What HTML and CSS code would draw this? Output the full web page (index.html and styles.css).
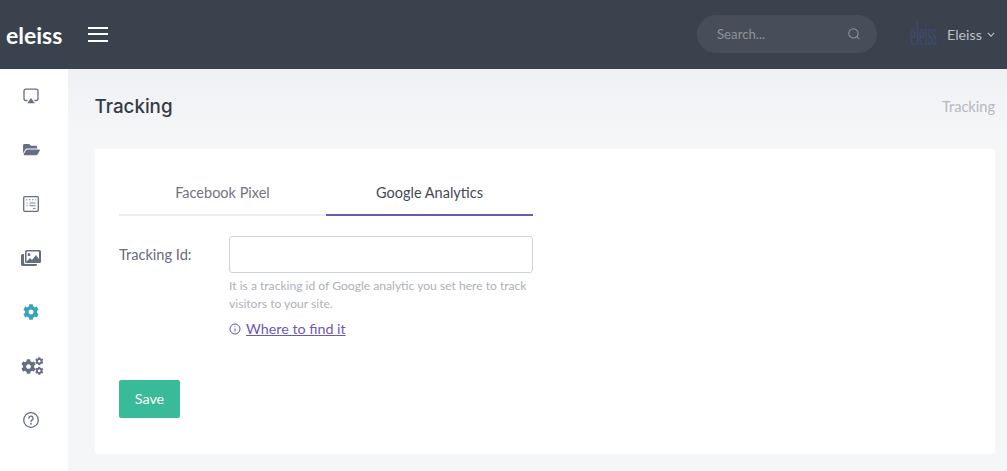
FILE: index.html
```html
<!DOCTYPE html>
<html lang="en">
<head>
<meta charset="utf-8">
<title>Tracking</title>
<link rel="stylesheet" href="styles.css">
</head>
<body>
<svg class="defs" aria-hidden="true">
  <symbol id="cog" viewBox="0 0 512 512"><path d="M487.4 315.7l-42.6-24.6c4.3-23.2 4.3-47 0-70.2l42.6-24.6c4.9-2.8 7.1-8.6 5.5-14-11.1-35.6-30-67.8-54.7-94.6-3.8-4.1-10-5.1-14.8-2.3L380.8 110c-17.9-15.4-38.5-27.3-60.8-35.1V25.8c0-5.6-3.9-10.5-9.4-11.7-36.7-8.2-74.3-7.8-109.2 0-5.5 1.2-9.4 6.1-9.4 11.7V75c-22.2 7.9-42.8 19.8-60.8 35.1L88.7 85.5c-4.9-2.8-11-1.9-14.8 2.3-24.7 26.7-43.6 58.9-54.7 94.6-1.7 5.4.6 11.2 5.5 14L67.3 221c-4.3 23.2-4.3 47 0 70.2l-42.6 24.6c-4.9 2.8-7.1 8.6-5.5 14 11.1 35.6 30 67.8 54.7 94.6 3.8 4.1 10 5.1 14.8 2.3l42.6-24.6c17.9 15.4 38.5 27.3 60.8 35.1v49.2c0 5.6 3.9 10.5 9.4 11.7 36.7 8.2 74.3 7.8 109.2 0 5.5-1.2 9.4-6.1 9.4-11.7v-49.2c22.2-7.9 42.8-19.8 60.8-35.1l42.6 24.6c4.9 2.8 11 1.9 14.8-2.3 24.7-26.7 43.6-58.9 54.7-94.6 1.5-5.5-.7-11.3-5.6-14.1zM256 336c-44.1 0-80-35.9-80-80s35.9-80 80-80 80 35.9 80 80-35.9 80-80 80z"/></symbol>
</svg>
<header class="topbar">
  <div class="brand">eleiss</div>
  <button class="burger" aria-label="Menu"><span></span><span></span><span></span></button>
  <div class="top-right">
    <div class="search">
      <span class="search-text">Search...</span>
      <svg class="search-icon" viewBox="0 0 24 24"><circle cx="11" cy="11" r="8"/><path d="M21 21l-4.300-4.300"/></svg>
    </div>
    <div class="user">
      <span class="avatar"><span class="avatar-text">eleiss</span></span>
      <span class="user-name">Eleiss</span>
      <svg class="chevron" viewBox="0 0 10 6"><path d="M1 1l4 4 4-4"/></svg>
    </div>
  </div>
</header>
<div class="body-row">
  <nav class="sidebar">
    <a class="nav-item">
      <svg class="ic-line ic16" viewBox="0 0 16 16"><path d="M4 12.500H2.800A1.800 1.800 0 0 1 1 10.700V3a1.800 1.800 0 0 1 1.800-1.800h10.400A1.800 1.800 0 0 1 15 3v7.700a1.800 1.800 0 0 1-1.800 1.800H12"/><path class="solid" d="M8 10l3.800 5.200H4.200z"/></svg>
    </a>
    <a class="nav-item">
      <svg class="ic-fill ic-folder" viewBox="0 0 576 512"><path d="M572.694 292.093L500.27 416.248A63.997 63.997 0 0 1 444.989 448H45.025c-18.523 0-30.064-20.093-20.731-36.093l72.424-124.155A64 64 0 0 1 152 256h399.964c18.523 0 30.064 20.093 20.73 36.093zM152 224h328v-48c0-26.51-21.49-48-48-48H272l-64-64H48C21.49 64 0 85.49 0 112v278.046l69.077-118.418C86.214 242.25 117.989 224 152 224z"/></svg>
    </a>
    <a class="nav-item">
      <svg class="ic-line ic16" viewBox="0 0 16 16"><rect x=".7" y=".7" width="14.600" height="14.600" rx="1"/><path class="thin" d="M3 3.800h10" stroke-dasharray="1.500 1.500"/><path class="thin" d="M3.500 7h1M6.500 7h6M3.500 9.700h1M6.500 9.700h6M10 12.400h2.500"/></svg>
    </a>
    <a class="nav-item">
      <svg class="ic-fill ic-images" viewBox="0 0 20 16"><path d="M3 4v8.500A1.500 1.500 0 0 0 4.500 14H16v.5a1.500 1.500 0 0 1-1.500 1.500h-13A1.500 1.500 0 0 1 0 14.500v-9A1.500 1.500 0 0 1 1.500 4z"/><path fill-rule="evenodd" d="M5.500 0h13A1.500 1.500 0 0 1 20 1.500v10a1.500 1.500 0 0 1-1.500 1.500h-13A1.500 1.500 0 0 1 4 11.500v-10A1.500 1.500 0 0 1 5.500 0zm.5 1.500a.5.500 0 0 0-.5.5v9l.1.500 3.400-3.500 2 2 4-5 3 4V2a.5.500 0 0 0-.5-.5zM8 3a1.500 1.500 0 1 1 0 3 1.500 1.500 0 0 1 0-3z"/></svg>
    </a>
    <a class="nav-item nav-active">
      <svg class="ic-fill ic16" viewBox="0 0 16 16"><use href="#cog"/></svg>
    </a>
    <a class="nav-item">
      <svg class="ic-fill ic-cogs" viewBox="0 0 23 18"><use href="#cog" x="0" y="2" width="15" height="15"/><use href="#cog" x="14" y="0" width="8.500" height="8.500"/><use href="#cog" x="14" y="9.500" width="8.500" height="8.500"/></svg>
    </a>
    <a class="nav-item">
      <svg class="ic-line ic16" viewBox="0 0 16 16"><circle cx="8" cy="8" r="7.300"/><path d="M5.900 6.200a2.100 2.100 0 1 1 3.300 1.700C8.500 8.400 8 8.800 8 9.600"/><path d="M8 11.300v.9"/></svg>
    </a>
  </nav>
  <main class="content">
    <div class="page-head">
      <h1 class="page-title">Tracking</h1>
      <span class="crumb">Tracking</span>
    </div>
    <section class="card">
      <div class="tabs">
        <div class="tab">Facebook Pixel</div>
        <div class="tab tab-active">Google Analytics</div>
      </div>
      <div class="field">
        <label class="field-label">Tracking Id:</label>
        <div class="field-body">
          <input class="text-input" type="text">
          <p class="hint">It is a tracking id of Google analytic you set here to track visitors to your site.</p>
          <div class="find">
            <svg class="info" viewBox="0 0 12 12"><circle cx="6" cy="6" r="5"/><path d="M6 5.500v3M6 3.300v.9"/></svg>
            <a class="find-link">Where to find it</a>
          </div>
        </div>
      </div>
      <button class="save">Save</button>
    </section>
  </main>
</div>
</body>
</html>
```

FILE: styles.css
```css
* { box-sizing: border-box; }
html, body { margin: 0; height: 471px; overflow: hidden; }
body { font-family: "Lato", "Noto Sans", sans-serif; background: #f3f4f7; color: #3a414d; display: flex; flex-direction: column; }
.defs { display: none; }

.topbar { height: 69px; flex: none; background: #3a424e; display: flex; align-items: center; }
.brand { width: 88px; padding-left: 6px; color: #fff; font-family: "Lato", sans-serif; font-size: 23px; font-weight: 700; }
.burger { width: 20px; height: 15px; padding: 0; border: 0; background: none; display: flex; flex-direction: column; justify-content: space-between; margin-bottom: 1px; }
.burger span { display: block; height: 2px; background: #fff; }
.top-right { margin-left: auto; display: flex; align-items: center; }
.search { width: 180px; height: 38px; border-radius: 19px; background: #474e59; display: flex; align-items: center; justify-content: space-between; padding: 0 16px 0 20px; margin-right: 31px; margin-bottom: 1px; }
.search-text { font-size: 13.200px; color: #8e939b; }
.search-icon { width: 14px; height: 14px; fill: none; stroke: #8e939b; stroke-width: 1.800; }
.user { display: flex; align-items: center; width: 99px; height: 40px; }
.avatar { width: 32px; flex: none; display: flex; justify-content: center; }
.avatar-text { font-family: "Liberation Serif", serif; font-size: 15px; color: #414a72; transform: scale(.8, 2.3); }
.user-name { font-size: 14.300px; color: #bcbfc5; margin-left: 7px; }
.chevron { width: 8px; height: 5px; margin-left: 5px; fill: none; stroke: #bcbfc5; stroke-width: 1.500; }

.body-row { flex: 1; display: flex; min-height: 0; }
.sidebar { width: 68px; flex: none; background: #fff; box-shadow: 1px 0 3px rgba(60, 70, 90, .06); }
.nav-item { height: 54px; display: flex; align-items: center; justify-content: center; padding-right: 6px; color: #676e84; }
.nav-active { color: #38a3b9; }
.ic16 { width: 16px; height: 16px; }
.ic-folder { width: 17px; height: 15px; margin-bottom: 1px; }
.ic-images { width: 20px; height: 16px; }
.ic-cogs { width: 23px; height: 18px; margin-left: 3px; }
.ic-fill { fill: currentColor; }
.ic-line { fill: none; stroke: currentColor; stroke-width: 1.300; stroke-linecap: round; stroke-linejoin: round; }
.ic-line .solid { fill: currentColor; stroke: none; }
.ic-line .thin { stroke-width: .9; stroke-linecap: butt; }

.content { flex: 1; min-width: 0; padding: 0 12px 0 27px; background: linear-gradient(#eff0f4, #f5f6f8 60px); }
.page-head { height: 80px; display: flex; align-items: center; justify-content: space-between; padding-bottom: 5px; }
.page-title { margin: 0 0 0 -.5px; font-family: "Inter", sans-serif; font-size: 18.800px; font-weight: 500; color: #333a46; }
.crumb { font-size: 14.600px; color: #b4b8be; }

.card { height: 305px; background: #fff; border-radius: 3px; padding: 24px; }
.tabs { width: 414px; display: flex; }
.tab { flex: 1; height: 43px; padding-top: 11px; text-align: center; font-size: 14.500px; color: #71767e; border-bottom: 2px solid #eceef0; }
.tab-active { color: #434a55; border-bottom-color: #6a59b5; }

.field { width: 414px; display: flex; margin-top: 20px; }
.field-label { width: 110px; flex: none; padding-top: 10px; font-size: 14.600px; color: #676d76; }
.field-body { flex: 1; }
.text-input { display: block; width: 100%; height: 37px; border: 1px solid #ced2d8; border-radius: 3px; background: #fff; }
.hint { margin: 4px 0 0; font-size: 12.100px; line-height: 18px; color: #adb1b8; }
.find { display: flex; align-items: center; margin-top: 7px; }
.info { width: 12px; height: 12px; margin-right: 5px; fill: none; stroke: #5f50a8; stroke-width: 1; }
.find-link { font-size: 14.300px; color: #6a59b5; text-decoration: underline; }
.save { display: block; width: 61px; height: 38px; margin-top: 43px; padding: 0 0 2px; border: 0; border-radius: 2px; background: #39ba98; color: #fff; font-family: inherit; font-size: 14.300px; }
```
